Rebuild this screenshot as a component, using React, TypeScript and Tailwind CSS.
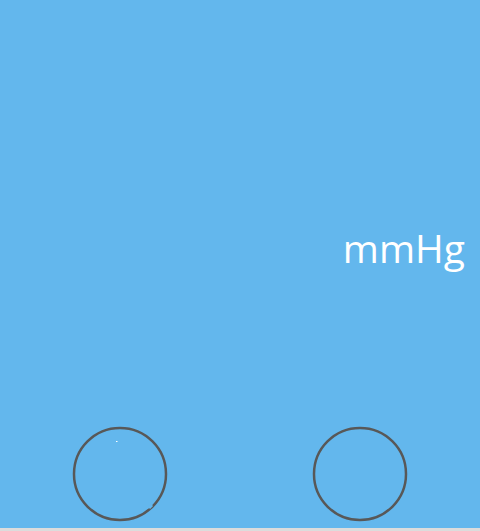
import React from 'react'

const Ring = ({ notch }: { notch?: boolean }) => (
  <svg width="96" height="96" viewBox="0 0 96 96">
    <circle cx="48" cy="48" r="46" fill="none" stroke="#585858" strokeWidth="2.5" />
    {notch && (
      <>
        <path d="M 77 82 L 80 79" stroke="#63b7ed" strokeWidth="3" />
        <rect x="44" y="15" width="1.5" height="1" fill="#ffffff" />
      </>
    )}
  </svg>
)

const App = () => {
  return (
    <div className="w-[480px] h-[531px] flex flex-col bg-[#dcdcdc]" style={{ fontFamily: '"Open Sans", sans-serif' }}>
      <div className="h-[528px] bg-[#63b7ed] flex flex-col">
        <div className="flex-1 flex items-start justify-end pr-[15px] pt-[228px]">
          <span className="text-white text-[39px] leading-none">mmHg</span>
        </div>
        <div className="flex pb-[6px]">
          <div className="flex-1 flex justify-center">
            <Ring notch />
          </div>
          <div className="flex-1 flex justify-center">
            <Ring />
          </div>
        </div>
      </div>
    </div>
  )
}

export default App
